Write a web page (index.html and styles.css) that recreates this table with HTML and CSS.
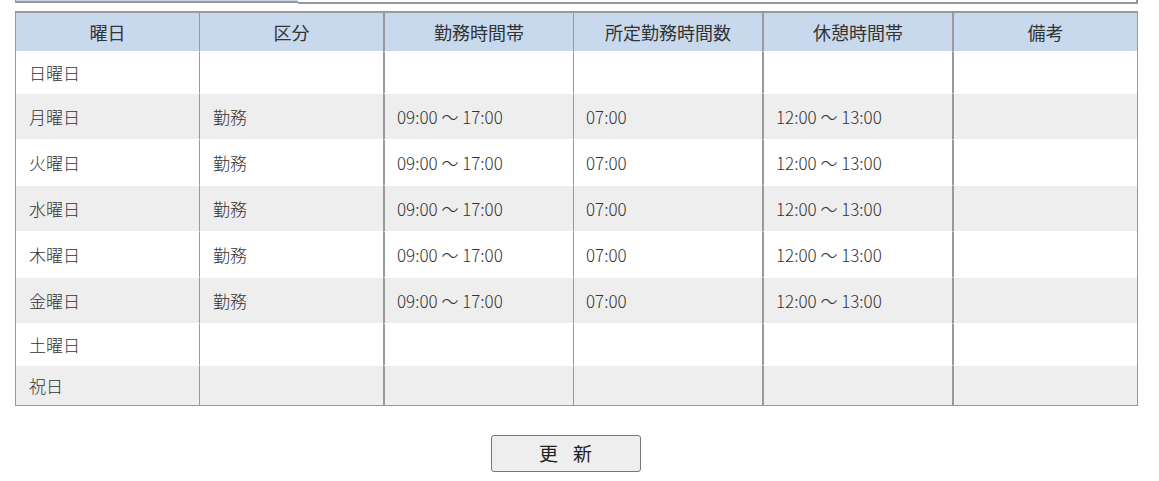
FILE: index.html
```html
<!DOCTYPE html>
<html lang="ja">
<head>
<meta charset="utf-8">
<link rel="stylesheet" href="styles.css">
</head>
<body>
<div class="tabs">
  <div class="tab-active"></div>
  <div class="tab-rest"></div>
</div>
<table class="schedule">
  <thead>
    <tr>
      <th class="c1">曜日</th>
      <th class="c2">区分</th>
      <th class="c3">勤務時間帯</th>
      <th class="c4">所定勤務時間数</th>
      <th class="c5">休憩時間帯</th>
      <th class="c6">備考</th>
    </tr>
  </thead>
  <tbody>
    <tr class="short"><td>日曜日</td><td></td><td></td><td></td><td></td><td></td></tr>
    <tr class="alt"><td>月曜日</td><td>勤務</td><td class="num">09:00 ～ 17:00</td><td class="num">07:00</td><td class="num">12:00 ～ 13:00</td><td></td></tr>
    <tr><td>火曜日</td><td>勤務</td><td class="num">09:00 ～ 17:00</td><td class="num">07:00</td><td class="num">12:00 ～ 13:00</td><td></td></tr>
    <tr class="alt"><td>水曜日</td><td>勤務</td><td class="num">09:00 ～ 17:00</td><td class="num">07:00</td><td class="num">12:00 ～ 13:00</td><td></td></tr>
    <tr><td>木曜日</td><td>勤務</td><td class="num">09:00 ～ 17:00</td><td class="num">07:00</td><td class="num">12:00 ～ 13:00</td><td></td></tr>
    <tr class="alt"><td>金曜日</td><td>勤務</td><td class="num">09:00 ～ 17:00</td><td class="num">07:00</td><td class="num">12:00 ～ 13:00</td><td></td></tr>
    <tr class="short"><td>土曜日</td><td></td><td></td><td></td><td></td><td></td></tr>
    <tr class="alt last"><td>祝日</td><td></td><td></td><td></td><td></td><td></td></tr>
  </tbody>
</table>
<div class="actions">
  <button class="update">更<span class="gap"></span>新</button>
</div>
</body>
</html>
```

FILE: styles.css
```css
html, body {
  margin: 0;
  padding: 0;
  background: #fff;
  font-family: "Noto Sans CJK JP", "Liberation Sans", sans-serif;
  color: #333;
}
.tabs {
  display: flex;
  margin: 0 21px 0 15px;
  height: 4px;
}
.tab-active {
  width: 282px;
  height: 1px;
  background: #c8d9ee;
  border-left: 1px solid #999;
  border-bottom: 2px solid #999;
}
.tab-rest {
  flex: 1;
  height: 2px;
  border-bottom: 2px solid #999;
  border-right: 2px solid #999;
}
.schedule {
  margin: 7px 0 0 15px;
  width: 1123px;
  border-collapse: separate;
  border-spacing: 0;
  border-top: 2px solid #999;
  border-bottom: 1px solid #999;
  border-left: 1px solid #999;
  border-right: 1px solid #999;
  table-layout: fixed;
  font-size: 17px;
}
.schedule th {
  background: #c8d9ed;
  height: 38px;
  font-size: 18px;
  font-weight: 400;
  color: #333;
  padding: 0;
  text-align: center;
  border-left: 1px solid #999;
}
.schedule th:first-child,
.schedule td:first-child { border-left: none; }
.schedule th.c3, .schedule th.c5, .schedule th.c6 { border-left: 2px solid #999; }
.schedule tbody td:nth-child(3),
.schedule tbody td:nth-child(5),
.schedule tbody td:nth-child(6) { border-left: 2px solid #999; }
.c1 { width: 183px; }
.c2 { width: 183px; }
.c3 { width: 188px; }
.c4 { width: 188px; }
.c5 { width: 188px; }
.c6 { width: auto; }
.schedule td {
  height: 45px;
  padding: 0 0 0 13px;
  border-left: 1px solid #999;
  border-top: 1px solid #fff;
  vertical-align: middle;
  background: #fff;
  font-weight: 300;
  color: #333;
}
.schedule tr.short td { height: 41px; }
.schedule tr.last td { height: 39px; }
.schedule tr.alt td { background: #eeeeee; }
.schedule td.num {
  padding-left: 12px;
}
.actions {
  display: flex;
  justify-content: center;
  padding-top: 29px;
  padding-right: 28px;
}
.update {
  display: flex;
  align-items: center;
  justify-content: center;
  width: 150px;
  height: 37px;
  background: #eeeeee;
  border: 1px solid #777;
  border-radius: 3px;
  font-family: "Noto Sans CJK JP", sans-serif;
  font-size: 19px;
  color: #222;
  padding: 0 0 2px 0;
}
.gap {
  display: inline-block;
  width: 15px;
}
```
